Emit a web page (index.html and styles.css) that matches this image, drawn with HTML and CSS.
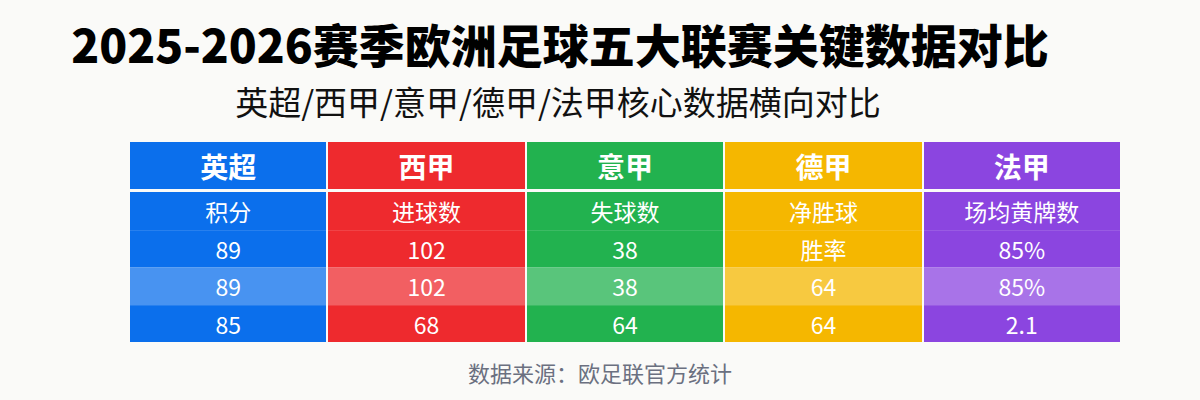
FILE: index.html
```html
<!DOCTYPE html>
<html lang="zh-CN">
<head>
<meta charset="utf-8">
<title>2025-2026赛季欧洲足球五大联赛关键数据对比</title>
<link rel="stylesheet" href="styles.css">
</head>
<body>
<div class="page">
  <h1 class="title">2025-2026赛季欧洲足球五大联赛关键数据对比</h1>
  <p class="subtitle">英超/西甲/意甲/德甲/法甲核心数据横向对比</p>
  <div class="table">
    <div class="col blue">
      <div class="head">英超</div>
      <div class="body">
        <div class="cell">积分</div>
        <div class="cell">89</div>
        <div class="cell hl">89</div>
        <div class="cell">85</div>
      </div>
    </div>
    <div class="col red">
      <div class="head">西甲</div>
      <div class="body">
        <div class="cell">进球数</div>
        <div class="cell">102</div>
        <div class="cell hl">102</div>
        <div class="cell">68</div>
      </div>
    </div>
    <div class="col green">
      <div class="head">意甲</div>
      <div class="body">
        <div class="cell">失球数</div>
        <div class="cell">38</div>
        <div class="cell hl">38</div>
        <div class="cell">64</div>
      </div>
    </div>
    <div class="col yellow">
      <div class="head">德甲</div>
      <div class="body">
        <div class="cell">净胜球</div>
        <div class="cell">胜率</div>
        <div class="cell hl">64</div>
        <div class="cell">64</div>
      </div>
    </div>
    <div class="col purple">
      <div class="head">法甲</div>
      <div class="body">
        <div class="cell">场均黄牌数</div>
        <div class="cell">85%</div>
        <div class="cell hl">85%</div>
        <div class="cell">2.1</div>
      </div>
    </div>
  </div>
  <p class="source">数据来源：欧足联官方统计</p>
</div>
</body>
</html>
```
FILE: styles.css
```css
* { box-sizing: border-box; }
html, body {
  margin: 0;
  padding: 0;
}
body {
  width: 1200px;
  height: 400px;
  overflow: hidden;
  background: #fafaf8;
  font-family: "Noto Sans CJK SC", "Noto Sans", sans-serif;
  color: #111;
}
.page {
  display: flex;
  flex-direction: column;
  align-items: center;
  padding-top: 16px;
}
.title {
  margin: 0 80px 0 0;
  font-size: 46px;
  line-height: 54px;
  font-weight: 900;
  color: #000;
}
.subtitle {
  margin: 11px 84px 0 0;
  font-size: 33px;
  line-height: 40px;
  font-weight: 400;
  color: #111;
}
.table {
  margin: 21px 0 0 50px;
  width: 990px;
  display: grid;
  grid-template-columns: repeat(5, 1fr);
  column-gap: 2px;
  color: #fff;
}
.col { display: flex; flex-direction: column; }
.head {
  height: 47px;
  display: flex;
  align-items: center;
  justify-content: center;
  font-size: 28px;
  font-weight: 700;
  margin-bottom: 3px;
  background: var(--c);
}
.body { background: var(--c); }
.cell {
  height: 37.5px;
  display: flex;
  align-items: center;
  justify-content: center;
  font-size: 23px;
  font-weight: 400;
  border-top: 1px solid rgba(255,255,255,0.12);
}
.cell:first-child { border-top: none; }
.cell.hl { background: rgba(255,255,255,0.25); }
.blue { --c: #0b6fec; }
.red { --c: #ee2a2e; }
.green { --c: #22b24f; }
.yellow { --c: #f5b700; }
.purple { --c: #8b45e0; }
.source {
  margin: 15px 0 0;
  font-size: 22px;
  line-height: 30px;
  color: #6b7080;
}
```
